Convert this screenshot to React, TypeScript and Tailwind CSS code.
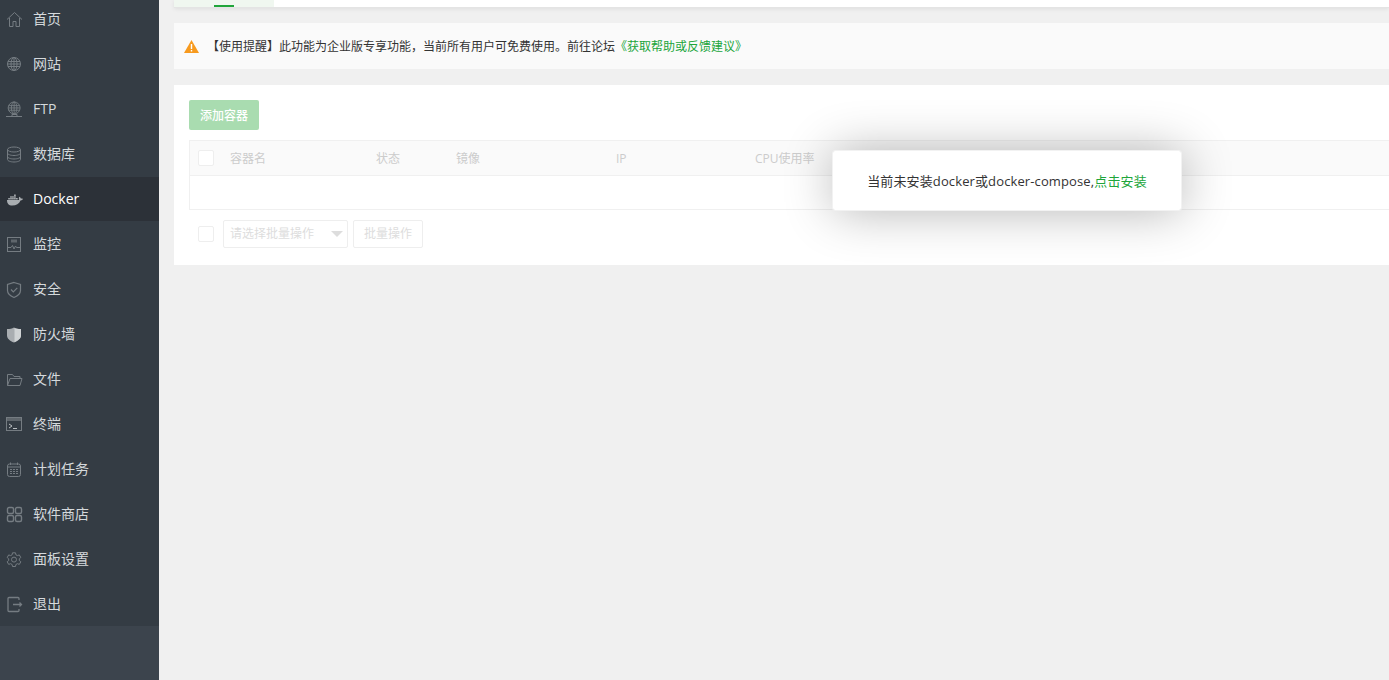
import React from "react";
import { FaDocker } from "react-icons/fa";

const S = ({ children }: { children: React.ReactNode }) => (
  <svg width="16" height="16" viewBox="0 0 16 16" fill="none" stroke="#757c82" strokeWidth="1" className="block overflow-visible">
    {children}
  </svg>
);

const Globe = () => (
  <>
    <circle cx="7" cy="7" r="6.5" />
    <ellipse cx="7" cy="7" rx="3" ry="6.5" />
    <path d="M7 .5v13M1 4.5h12M.5 7h13M1 9.5h12" />
  </>
);

const icons: Record<string, React.ReactNode> = {
  home: <S><path d="M0 7.500 7.500 .5 15 7.500M2.500 6v8.500h3.500v-5h3v5h3.500V6" /></S>,
  globe: <S><Globe /></S>,
  ftp: (
    <S>
      <g transform="translate(.7 -.5) scale(.92)"><Globe /></g>
      <path d="M-1 14.500h16M5 12.500h5v2H5z" />
    </S>
  ),
  db: (
    <S>
      <ellipse cx="7" cy="2.500" rx="6.500" ry="2.500" />
      <path d="M.5 2.500v10c0 1.400 3 2.500 6.500 2.500s6.500-1.100 6.500-2.500v-10M.5 6c0 1.400 3 2.500 6.500 2.500S13.500 7.400 13.500 6M.5 9.500c0 1.400 3 2.500 6.500 2.500s6.500-1.100 6.500-2.500" />
    </S>
  ),
  docker: <FaDocker size={16} color="#a9adb1" className="block" />,
  monitor: (
    <S>
      <rect x=".5" y=".5" width="13" height="14" />
      <path d="M1 10.500h3l1.500-2 1.500 3.500 1.500-3 1 1.500h3.500" />
      <path d="M4 2.500h6v3H4z" fill="#5f666c" stroke="none" />
    </S>
  ),
  shield: (
    <S>
      <path d="M7 .5 13.500 2.500v6c0 3-3 5.500-6.500 7C3.500 14 .5 11.500.5 8.500v-6z" strokeWidth="1.200" />
      <path d="m4 7.500 2.300 2.300 4-4" strokeWidth="1.200" />
    </S>
  ),
  wall: (
    <S>
      <path fill="#a9adb1" stroke="none" d="M7 .5c2 1.200 4 1.500 7 1.500v6.500c0 3-3 5.500-7 7-4-1.500-7-4-7-7V2c3 0 5-.3 7-1.500z" />
      <path fill="#d0d3d5" stroke="none" d="M7.500 1v14c3.500-1.500 6.500-3.500 6.500-6.500V2c-3 0-5-.3-6.500-1z" />
    </S>
  ),
  folder: <S><path d="M.5 13.500v-11h5l1.500 2h6v2M.5 13.500h12.500l2-7H3z" /></S>,
  term: (
    <S>
      <rect x="-.500" y=".5" width="15" height="13" />
      <path d="M0 1h14v3H0z" fill="#5f666c" stroke="none" />
      <path d="m2 7 3 2-3 2M6 11.500h4" stroke="#b9bdc0" />
    </S>
  ),
  cal: (
    <S>
      <rect x=".5" y="2" width="13" height="12.500" rx="2" />
      <path d="M.5 5h13M3.500 .5V3M10.500 .5V3" />
      <path d="M3 7.500h8M3 9.500h8M3 11.500h8" strokeDasharray="2 1" />
    </S>
  ),
  apps: (
    <S>
      <rect x=".5" y=".5" width="6" height="6" rx="1.500" strokeWidth="1.400" />
      <rect x="8.500" y=".5" width="6" height="6" rx="1.500" strokeWidth="1.400" />
      <rect x=".5" y="8.500" width="6" height="6" rx="1.500" strokeWidth="1.400" />
      <rect x="8.500" y="8.500" width="6" height="6" rx="1.500" strokeWidth="1.400" />
    </S>
  ),
  gear: (
    <S>
      <path d="M5.500.8h3l.4 2 1.500.8 1.900-.7 1.500 2.600-1.500 1.300v1.700l1.500 1.300-1.500 2.600-1.900-.7-1.500.8-.4 2h-3l-.4-2-1.500-.8-1.900.7L.2 9.800l1.500-1.300V6.800L.2 5.500l1.500-2.600 1.900.7 1.500-.8z" />
      <circle cx="7" cy="7.600" r="2.500" />
    </S>
  ),
  exit: (
    <S>
      <path d="M12 3V1.500q0-1-1-1H2q-1 0-1 1v12q0 1 1 1h9q1 0 1-1V12M6 7.500H14.500M12.500 5.500l2 2-2 2" strokeWidth="1.300" />
    </S>
  ),
};

const nav: [string, string][] = [
  ["home", "首页"],
  ["globe", "网站"],
  ["ftp", "FTP"],
  ["db", "数据库"],
  ["docker", "Docker"],
  ["monitor", "监控"],
  ["shield", "安全"],
  ["wall", "防火墙"],
  ["folder", "文件"],
  ["term", "终端"],
  ["cal", "计划任务"],
  ["apps", "软件商店"],
  ["gear", "面板设置"],
  ["exit", "退出"],
];

const Check = () => <span className="block w-4 h-4 shrink-0 border border-[#eeeeee] rounded-[2px] bg-white" />;

export default function App() {
  return (
    <div
      className="flex w-[1389px] h-[680px] overflow-hidden relative bg-[#f0f0f0] text-[12px] text-[#333333]"
      style={{ fontFamily: '"Open Sans", "Noto Sans CJK SC", sans-serif' }}
    >
      <aside className="w-[159px] shrink-0 bg-[#3c444d] overflow-hidden">
        <ul className="-mt-[3px] bg-[#343c44]">
          {nav.map(([ic, label]) => (
            <li
              key={label}
              className={
                "flex items-center h-[44px] mb-[1px] last:mb-0 pl-[7px] text-[14px] " +
                (label === "Docker" ? "bg-[#2c3138] text-white" : "text-[#d5d9dc]")
              }
            >
              <span className="w-[26px] shrink-0 mt-[1px]">{icons[ic]}</span>
              <span className="mb-[2px]">{label}</span>
            </li>
          ))}
        </ul>
      </aside>

      <main className="flex-1 min-w-0 pl-[15px]">
        <div className="h-[8px] bg-white border-b border-[#e4e4e4] shadow-[0_1px_4px_rgba(0,0,0,0.08)] flex">
          <div className="w-[100px] h-full bg-[#f0f7f0] flex justify-center items-end">
            <span className="block w-[20px] h-[2px] bg-[#20a53a]" />
          </div>
        </div>

        <div className="mt-[15px] h-[46px] bg-[#fafafa] flex items-center pl-[10px] text-[12px]">
          <svg width="15" height="13" viewBox="0 0 15 13" className="block shrink-0">
            <path d="M7.500 0 15 13H0z" fill="#f79a1e" />
            <path d="M6.800 4h1.400v5H6.800zM6.800 10h1.400v1.400H6.800z" fill="#ffffff" />
          </svg>
          <span className="ml-[8px] pt-[2px] whitespace-nowrap">
            【使用提醒】此功能为企业版专享功能，当前所有用户可免费使用。前往论坛
            <span className="text-[#20a53a]">《获取帮助或反馈建议》</span>
          </span>
        </div>

        <section className="mt-[16px] h-[180px] bg-white pt-[15px] pl-[15px]">
          <button className="block w-[70px] h-[30px] pt-[1px] rounded-[2px] bg-[#a9dcb0] text-white text-[12px] font-medium">
            添加容器
          </button>

          <div className="mt-[10px] h-[70px] border border-r-0 border-[#f0f0f0]">
            <div className="h-[35px] bg-[#fafafa] border-b border-[#f0f0f0] flex items-center text-[#cccccc]">
              <span className="w-[40px] pl-[8px]"><Check /></span>
              <span className="w-[146px] pt-[2px]">容器名</span>
              <span className="w-[80px] pt-[2px]">状态</span>
              <span className="w-[160px] pt-[2px]">镜像</span>
              <span className="w-[139px] pt-[2px]">IP</span>
              <span className="pt-[2px]">CPU使用率</span>
            </div>
          </div>

          <div className="mt-[10px] flex items-center h-[28px] pl-[9px] text-[#dddddd]">
            <Check />
            <div className="ml-[9px] w-[125px] h-[28px] border border-[#eeeeee] rounded-[2px] flex items-center justify-between pl-[6px] pr-[3px]">
              <span>请选择批量操作</span>
              <span className="w-0 h-0 border-x-[6px] border-x-transparent border-t-[6px] border-t-[#dddddd] mr-[1px]" />
            </div>
            <div className="ml-[5px] w-[70px] h-[28px] border border-[#eeeeee] rounded-[2px] flex items-center justify-center">
              批量操作
            </div>
          </div>
        </section>
      </main>

      <div className="absolute left-[833px] top-[151px] w-[348px] h-[59px] pt-[2px] rounded-[2px] bg-white outline outline-[#f2f2f2] shadow-[1px_1px_50px_rgba(0,0,0,0.3)] flex items-center justify-center text-[13px] tracking-[0.12px] text-[#333333] whitespace-nowrap">
        当前未安装docker或docker-compose,<span className="text-[#20a53a]">点击安装</span>
      </div>
    </div>
  );
}
